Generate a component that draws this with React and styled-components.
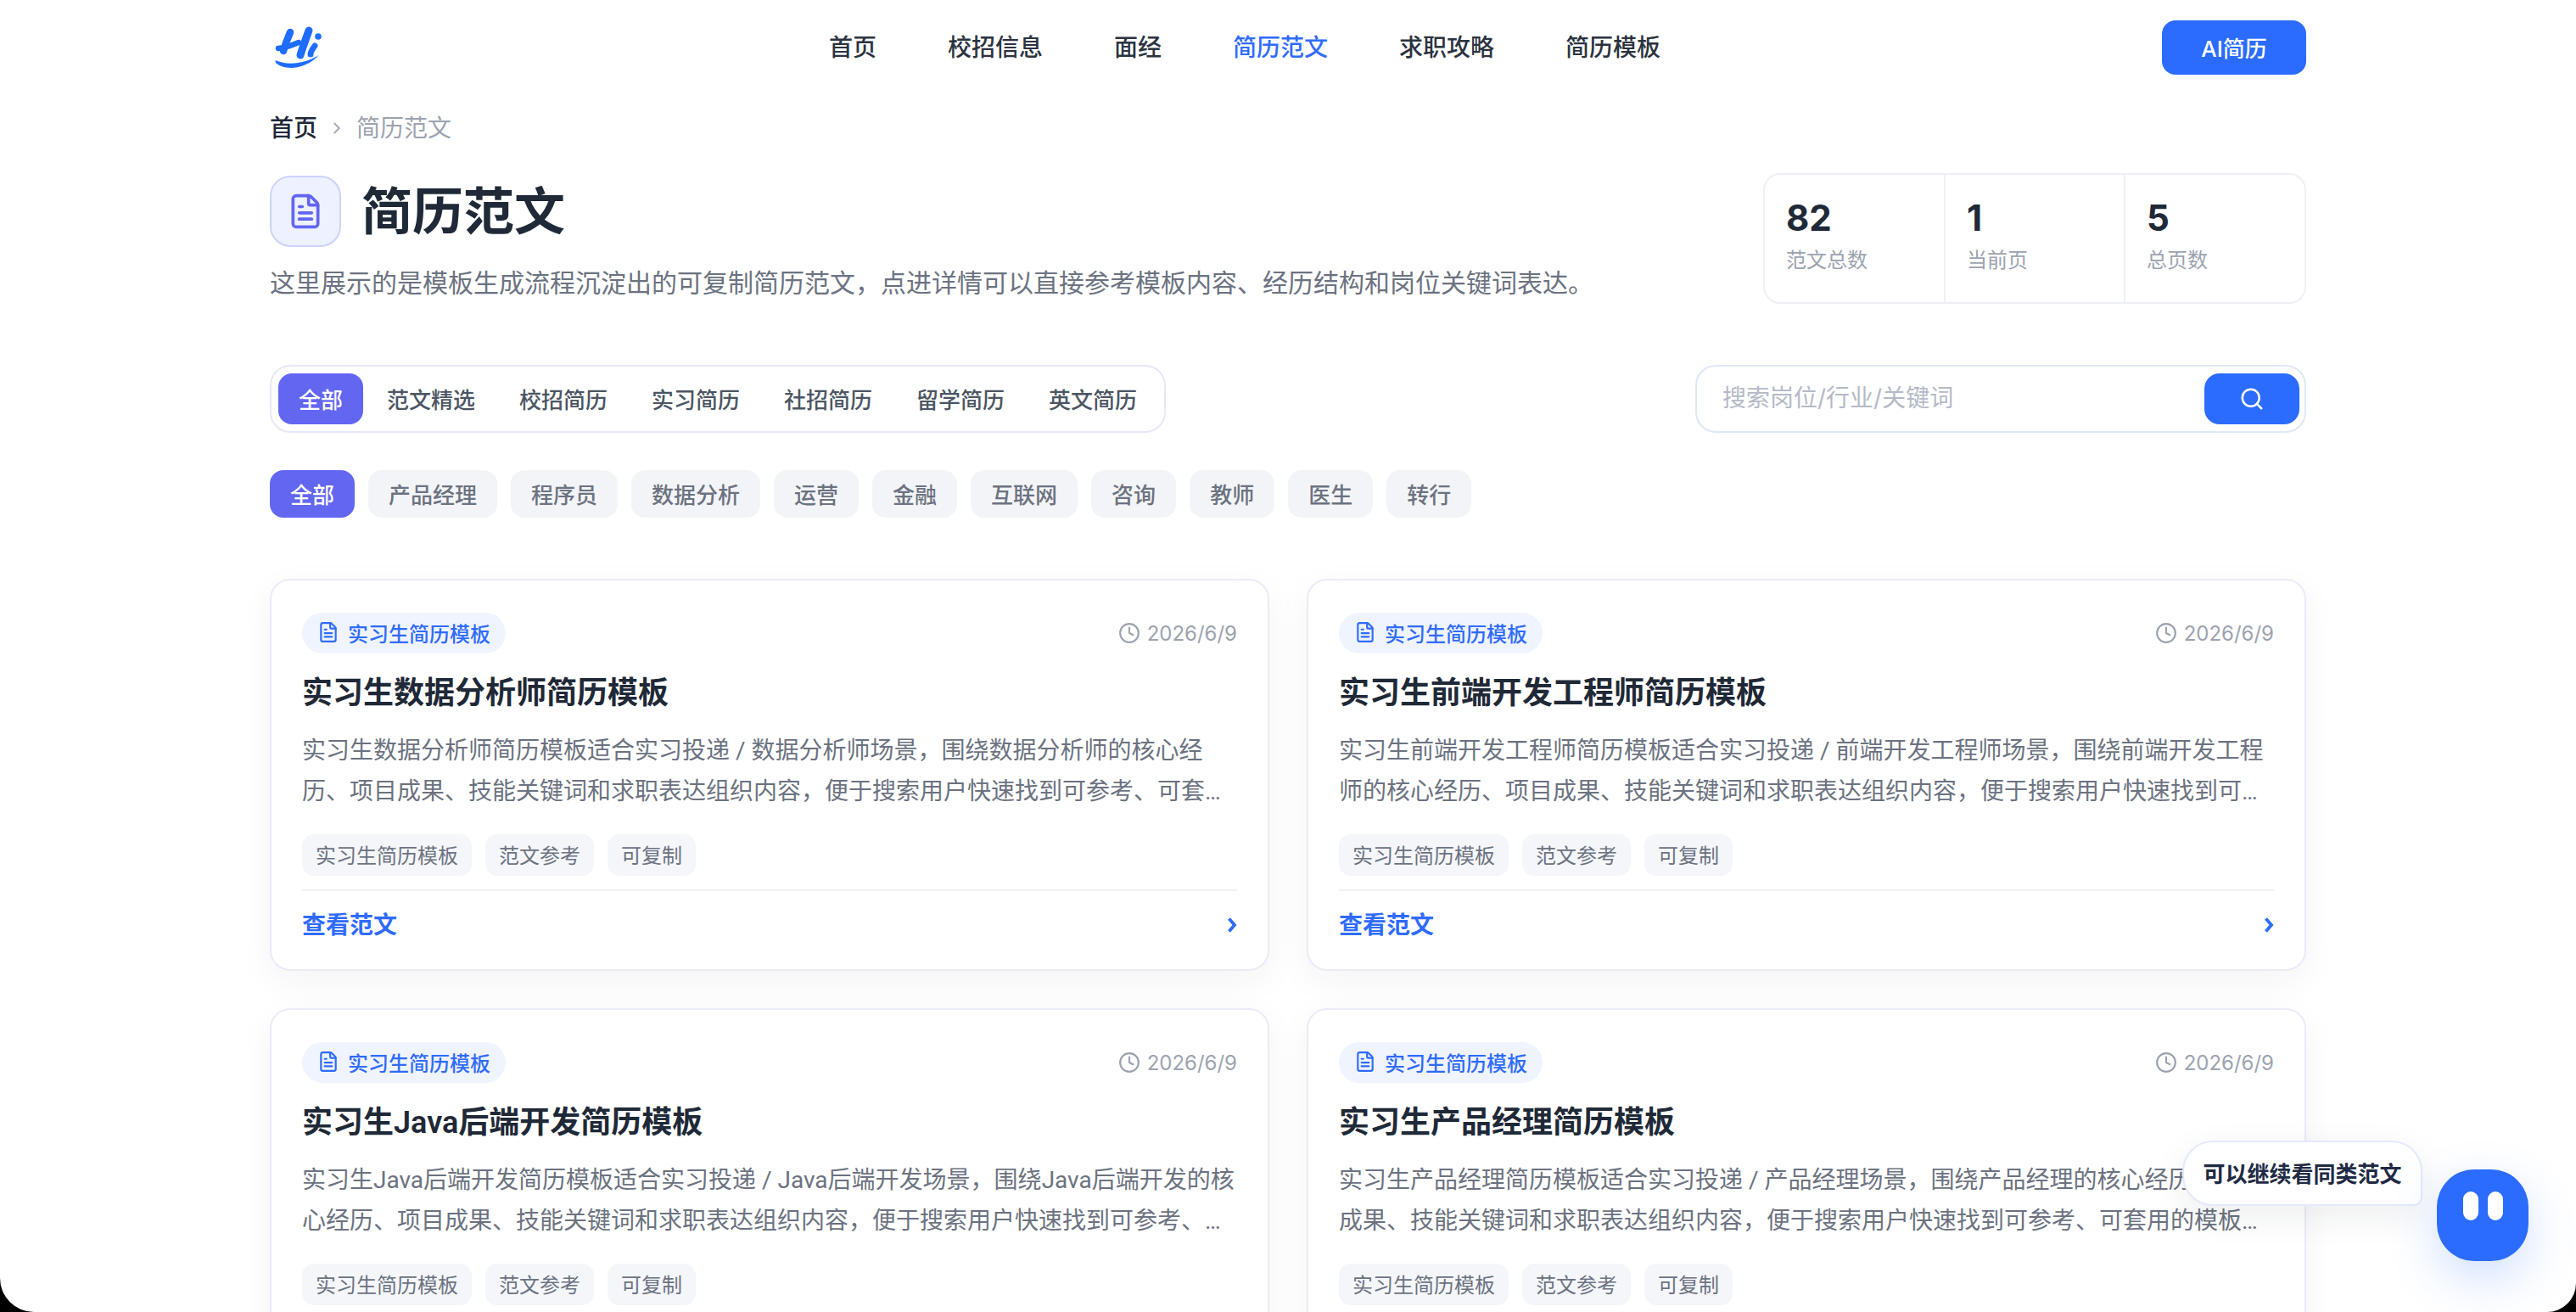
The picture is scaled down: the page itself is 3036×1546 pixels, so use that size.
import React from "react";
import styled, { createGlobalStyle } from "styled-components";
import { ChevronRight, Clock, FileText, Search } from "lucide-react";

const Global = createGlobalStyle`
  html, body {
    margin: 0;
    padding: 0;
    background: #000;
    overflow: hidden;
  }
  * {
    box-sizing: border-box;
  }
  body {
    font-family: Inter, "Noto Sans CJK SC", "Noto Sans", sans-serif;
    color: #1f2937;
  }
`;

const Page = styled.div`
  position: relative;
  height: 1546px;
  overflow: hidden;
  background: #fff;
  border-radius: 0 0 34px 40px;
`;

const Wrap = styled.div`
  width: 2400px;
  margin: 0 auto;
`;

const Header = styled.header`
  height: 112px;
  display: flex;
  align-items: center;
  justify-content: space-between;
`;

const Logo = styled.div`
  width: 68px;
  padding-left: 5px;
  display: flex;
`;

const Nav = styled.nav`
  display: flex;
  gap: 84px;
`;

const NavLink = styled.a`
  font-size: 28px;
  font-weight: 500;
  line-height: 40px;
  color: ${(p) => (p.$active ? "#2f6bff" : "#2b3340")};
`;

const AiButton = styled.button`
  width: 170px;
  height: 64px;
  padding: 0 0 2px;
  border: 0;
  border-radius: 16px;
  background: #2b6cff;
  color: #fff;
  font-family: inherit;
  font-size: 26px;
  font-weight: 500;
`;

const Crumbs = styled.div`
  margin-top: 21px;
  height: 36px;
  display: flex;
  align-items: center;
  gap: 12px;
  font-size: 28px;
  line-height: 36px;
`;

const CrumbLink = styled.span`
  font-weight: 500;
  color: #1f2937;
`;

const CrumbNow = styled.span`
  color: #9ca3af;
`;

const CrumbSep = styled.span`
  display: flex;
  color: #a3a9b5;
`;

const Hero = styled.section`
  margin-top: 35px;
  display: flex;
  align-items: center;
  justify-content: space-between;
`;

const TitleRow = styled.div`
  display: flex;
  align-items: center;
  gap: 24px;
`;

const TitleIcon = styled.div`
  width: 84px;
  height: 84px;
  display: flex;
  align-items: center;
  justify-content: center;
  border: 2px solid #cdd3fb;
  border-radius: 24px;
  background: #eef1ff;
  color: #6366f1;
`;

const Title = styled.h1`
  margin: 0;
  font-size: 60px;
  line-height: 84px;
  font-weight: 600;
  color: #1f2937;
`;

const Subtitle = styled.p`
  margin: 20px 0 0;
  font-size: 30px;
  line-height: 44px;
  color: #6b7280;
`;

const Stats = styled.div`
  width: 640px;
  height: 154px;
  display: grid;
  grid-template-columns: 211px 212px 1fr;
  border: 2px solid #eef0f6;
  border-radius: 20px;
  background: #fff;
`;

const Stat = styled.div`
  padding: 25px 25px 0;
  & + & {
    border-left: 2px solid #eef0f6;
  }
`;

const StatValue = styled.div`
  font-size: 42px;
  line-height: 52px;
  font-weight: 700;
  color: #1f2937;
`;

const StatLabel = styled.div`
  margin-top: 7px;
  font-size: 24px;
  line-height: 34px;
  color: #9ca3af;
`;

const FilterRow = styled.div`
  margin-top: 72px;
  display: flex;
  align-items: center;
  justify-content: space-between;
`;

const Tabs = styled.div`
  height: 80px;
  display: flex;
  align-items: center;
  gap: 4px;
  padding: 0 8px;
  border: 2px solid #e6e8f8;
  border-radius: 24px;
  background: #fff;
`;

const Tab = styled.button`
  height: 60px;
  padding: 0 24px 2px;
  border: 0;
  border-radius: 16px;
  background: ${(p) => (p.$active ? "#6366f1" : "transparent")};
  color: ${(p) => (p.$active ? "#fff" : "#4b5563")};
  font-family: inherit;
  font-size: 26px;
  font-weight: 500;
`;

const SearchBox = styled.div`
  width: 720px;
  height: 80px;
  display: flex;
  align-items: center;
  padding: 0 6px 0 30px;
  border: 2px solid #dfe7f5;
  border-radius: 24px;
  background: #fff;
`;

const SearchInput = styled.input`
  flex: 1;
  min-width: 0;
  padding: 0 0 2px;
  border: 0;
  outline: 0;
  background: transparent;
  font-family: inherit;
  font-size: 28px;
  color: #1f2937;
  &::placeholder {
    color: #b4bac6;
    opacity: 1;
  }
`;

const SearchButton = styled.button`
  width: 112px;
  height: 60px;
  display: flex;
  align-items: center;
  justify-content: center;
  border: 0;
  border-radius: 18px;
  background: #2b6cff;
  color: #fff;
`;

const Chips = styled.div`
  margin-top: 44px;
  display: flex;
  gap: 16px;
`;

const Chip = styled.button`
  height: 56px;
  padding: 0 24px 2px;
  border: 0;
  border-radius: 16px;
  background: ${(p) => (p.$active ? "#6366f1" : "#f3f4f7")};
  color: ${(p) => (p.$active ? "#fff" : "#6b7280")};
  font-family: inherit;
  font-size: 26px;
  font-weight: 500;
`;

const Grid = styled.div`
  margin-top: 72px;
  display: grid;
  grid-template-columns: repeat(2, 1fr);
  gap: 44px;
`;

const Card = styled.article`
  padding: 38px 36px 32px;
  border: 2px solid #e9ebf8;
  border-radius: 24px;
  background: #fff;
  box-shadow: 0 12px 40px rgba(31, 41, 55, 0.05);
`;

const CardTop = styled.div`
  display: flex;
  align-items: center;
  justify-content: space-between;
`;

const Pill = styled.span`
  height: 48px;
  display: inline-flex;
  align-items: center;
  gap: 10px;
  padding: 0 18px 2px;
  border-radius: 24px;
  background: #f0f4ff;
  color: #2f6bff;
  font-size: 24px;
  font-weight: 500;
`;

const DateText = styled.span`
  display: flex;
  align-items: center;
  gap: 8px;
  font-size: 24px;
  color: #9ca3af;
`;

const CardTitle = styled.h3`
  margin: 22px 0 0;
  font-family: Roboto, "Noto Sans CJK SC", sans-serif;
  font-size: 36px;
  line-height: 50px;
  font-weight: 600;
  color: #1f2937;
`;

const CardDesc = styled.p`
  margin: 19px 0 0;
  height: 96px;
  font-family: Roboto, "Noto Sans CJK SC", sans-serif;
  font-size: 28px;
  line-height: 48px;
  color: #6b7280;
`;

const Tags = styled.div`
  margin-top: 26px;
  display: flex;
  gap: 16px;
`;

const Tag = styled.span`
  height: 49px;
  display: flex;
  align-items: center;
  padding: 0 16px 2px;
  border-radius: 14px;
  background: #f5f6fa;
  color: #6b7280;
  font-size: 24px;
`;

const CardFoot = styled.div`
  margin-top: 16px;
  padding-top: 20px;
  border-top: 2px solid #f1f2f6;
  display: flex;
  align-items: center;
  justify-content: space-between;
`;

const ReadLink = styled.a`
  font-size: 28px;
  line-height: 40px;
  font-weight: 600;
  color: #2f6bff;
`;

const Bubble = styled.div`
  position: absolute;
  left: 2572px;
  top: 1344px;
  width: 283px;
  height: 77px;
  display: flex;
  align-items: center;
  justify-content: center;
  padding-bottom: 2px;
  border: 2px solid #e3e9fb;
  border-radius: 36px 36px 10px 36px;
  background: #fff;
  box-shadow: 0 12px 40px rgba(31, 41, 55, 0.08);
  color: #1f2a44;
  font-size: 26px;
  font-weight: 600;
`;

const Robot = styled.div`
  position: absolute;
  left: 2872px;
  top: 1378px;
  width: 108px;
  height: 108px;
  display: flex;
  justify-content: center;
  gap: 11px;
  padding-top: 26px;
  border-radius: 44px;
  background: #2b6cff;
  box-shadow: 0 20px 56px rgba(43, 108, 255, 0.22);
`;

const Eye = styled.span`
  width: 18px;
  height: 34px;
  border-radius: 9px;
  background: #fff;
`;

const navItems = ["首页", "校招信息", "面经", "简历范文", "求职攻略", "简历模板"];
const tabs = ["全部", "范文精选", "校招简历", "实习简历", "社招简历", "留学简历", "英文简历"];
const chips = ["全部", "产品经理", "程序员", "数据分析", "运营", "金融", "互联网", "咨询", "教师", "医生", "转行"];
const stats = [
  { value: "82", label: "范文总数" },
  { value: "1", label: "当前页" },
  { value: "5", label: "总页数" },
];

const tail = "项目成果、技能关键词和求职表达组织内容，便于搜索用户快速找到";
const cards = [
  { name: "实习生数据分析师简历模板", role: "数据分析师", end: "可参考、可套…" },
  { name: "实习生前端开发工程师简历模板", role: "前端开发工程师", end: "可…" },
  { name: "实习生Java后端开发简历模板", role: "Java后端开发", end: "可参考、…" },
  { name: "实习生产品经理简历模板", role: "产品经理", end: "可参考、可套用的模板…" },
];

function HiLogo() {
  return (
    <svg width="56" height="52" viewBox="323 30 56 52" fill="none" stroke="#1f6dff" strokeLinecap="round">
      <path d="M342 38 C339 45 336 53 334 60" strokeWidth="8.5" />
      <path d="M328 57 C337 56 345 53 352 50" strokeWidth="6.5" />
      <path d="M364 36 C360 47 356 58 354 65" strokeWidth="9" />
      <path d="M371 54 C368 58 366 61 366 64" strokeWidth="7" />
      <circle cx="375" cy="43" r="3.8" fill="#1f6dff" stroke="none" />
      <path d="M324.5 71 C338 77 358 76 376 65 C362 80 338 85 325 74 Z" fill="#1f6dff" stroke="none" />
    </svg>
  );
}

function ArrowSmall() {
  return (
    <svg width="12" height="20" viewBox="0 0 12 20" fill="none">
      <path d="M2.5 2.5 L9 10 L2.5 17.5" stroke="#2f6bff" strokeWidth="3.8" />
    </svg>
  );
}

function ResumeCard({ name, role, end }) {
  return (
    <Card>
      <CardTop>
        <Pill>
          <FileText size={26} strokeWidth={2} />
          实习生简历模板
        </Pill>
        <DateText>
          <Clock size={26} strokeWidth={2} />
          2026/6/9
        </DateText>
      </CardTop>
      <CardTitle>{name}</CardTitle>
      <CardDesc>
        {name}适合实习投递 / {role}场景，围绕{role}的核心经历、{tail}
        {end}
      </CardDesc>
      <Tags>
        <Tag>实习生简历模板</Tag>
        <Tag>范文参考</Tag>
        <Tag>可复制</Tag>
      </Tags>
      <CardFoot>
        <ReadLink>查看范文</ReadLink>
        <ArrowSmall />
      </CardFoot>
    </Card>
  );
}

export default function App() {
  return (
    <Page>
      <Global />
      <Wrap>
        <Header>
          <Logo>
            <HiLogo />
          </Logo>
          <Nav>
            {navItems.map((item) => (
              <NavLink key={item} $active={item === "简历范文"}>
                {item}
              </NavLink>
            ))}
          </Nav>
          <AiButton>AI简历</AiButton>
        </Header>

        <Crumbs>
          <CrumbLink>首页</CrumbLink>
          <CrumbSep>
            <ChevronRight size={22} strokeWidth={2} />
          </CrumbSep>
          <CrumbNow>简历范文</CrumbNow>
        </Crumbs>

        <Hero>
          <div>
            <TitleRow>
              <TitleIcon>
                <FileText size={44} strokeWidth={2} />
              </TitleIcon>
              <Title>简历范文</Title>
            </TitleRow>
            <Subtitle>这里展示的是模板生成流程沉淀出的可复制简历范文，点进详情可以直接参考模板内容、经历结构和岗位关键词表达。</Subtitle>
          </div>
          <Stats>
            {stats.map((s) => (
              <Stat key={s.label}>
                <StatValue>{s.value}</StatValue>
                <StatLabel>{s.label}</StatLabel>
              </Stat>
            ))}
          </Stats>
        </Hero>

        <FilterRow>
          <Tabs>
            {tabs.map((t, i) => (
              <Tab key={t} $active={i === 0}>
                {t}
              </Tab>
            ))}
          </Tabs>
          <SearchBox>
            <SearchInput placeholder="搜索岗位/行业/关键词" />
            <SearchButton>
              <Search size={30} strokeWidth={2} />
            </SearchButton>
          </SearchBox>
        </FilterRow>

        <Chips>
          {chips.map((c, i) => (
            <Chip key={c} $active={i === 0}>
              {c}
            </Chip>
          ))}
        </Chips>

        <Grid>
          {cards.map((c) => (
            <ResumeCard key={c.name} name={c.name} role={c.role} end={c.end} />
          ))}
        </Grid>
      </Wrap>

      <Bubble>可以继续看同类范文</Bubble>
      <Robot>
        <Eye />
        <Eye />
      </Robot>
    </Page>
  );
}
